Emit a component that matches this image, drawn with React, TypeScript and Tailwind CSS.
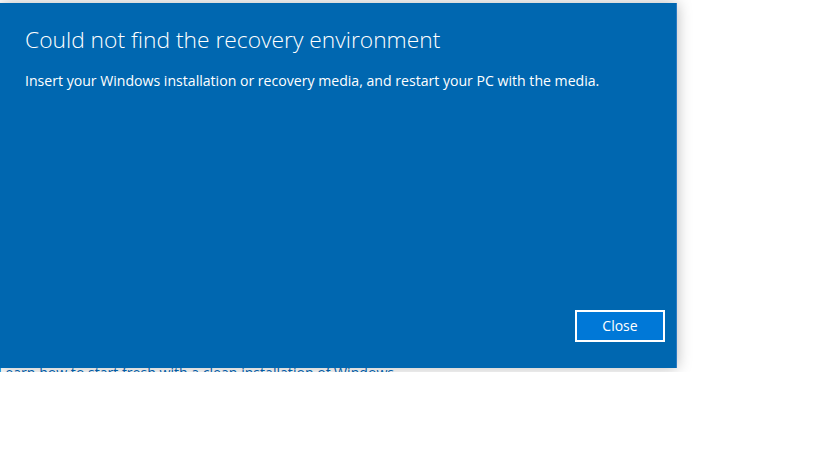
export default function App() {
  return (
    <main className="w-[819px] h-[460px] bg-white overflow-hidden font-['Open_Sans',sans-serif]">
      <div className="relative h-[372px] overflow-hidden">
        <div className="pt-[360px] -ml-[2px]">
          <a className="text-[14.1px] text-[#0067b8] leading-[20px] whitespace-nowrap">
            Learn how to start fresh with a clean installation of Windows
          </a>
        </div>

        <div className="absolute left-0 top-[3px] w-[677px] h-[365px] bg-[#0067b0] border-r border-[#2a7cc4] shadow-[0_0_14px_rgba(0,0,0,0.28)] flex flex-col px-[25px] pt-[22px] pb-[26px]">
          <h1 className="text-[22.8px] font-light text-white leading-[30px]">
            Could not find the recovery environment
          </h1>
          <p className="mt-[16px] text-[14.1px] text-white leading-[20px]">
            Insert your Windows installation or recovery media, and restart your PC with the media.
          </p>
          <div className="mt-auto flex justify-end">
            <button className="w-[90px] h-[32px] -mr-[14px] border-2 border-white bg-[#0078d7] text-white text-[14px] leading-none">
              Close
            </button>
          </div>
        </div>
      </div>
    </main>
  );
}
